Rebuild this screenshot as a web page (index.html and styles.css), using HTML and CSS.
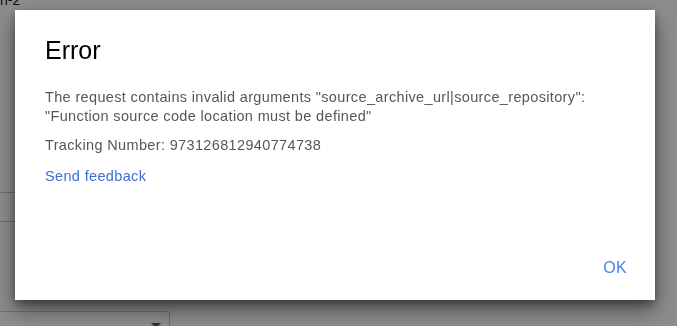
FILE: index.html
```html
<!DOCTYPE html>
<html>
<head>
<meta charset="utf-8">
<link rel="stylesheet" href="styles.css">
</head>
<body>
<div class="page">
  <div class="crumb">n-2</div>
  <div class="rows">
    <div class="row"></div>
    <div class="row"></div>
  </div>
  <div class="select"><span class="arrow"></span></div>
</div>
<div class="scrim"></div>
<div class="dialog">
  <div class="content">
    <h1 class="title">Error</h1>
    <p class="msg">The request contains invalid arguments "source_archive_url|source_repository":<br>"Function source code location must be defined"</p>
    <p class="msg">Tracking Number: 973126812940774738</p>
    <a class="link" href="#">Send feedback</a>
  </div>
  <div class="actions">
    <button class="btn">OK</button>
  </div>
</div>
</body>
</html>
```
FILE: styles.css
```css
html, body {
  margin: 0;
  padding: 0;
  width: 677px;
  height: 326px;
  overflow: hidden;
  background: #ffffff;
  font-family: "Liberation Sans", Arial, sans-serif;
}
.page {
  display: flex;
  flex-direction: column;
}
.crumb {
  font-size: 14px;
  line-height: 16px;
  margin-top: -8px;
  color: #202020;
}
.rows {
  margin-top: 184px;
  width: 320px;
}
.row {
  height: 28px;
  border-top: 1px solid #c4c4c4;
}
.select {
  margin-top: 61px;
  width: 169px;
  height: 15px;
  border-top: 1px solid #c8c8c8;
  border-right: 1px solid #c8c8c8;
  border-radius: 0 3px 0 0;
  position: relative;
}
.arrow {
  position: absolute;
  left: 151px;
  top: 11px;
  width: 0;
  height: 0;
  border-left: 5px solid transparent;
  border-right: 5px solid transparent;
  border-top: 5px solid #555;
}
.scrim {
  position: fixed;
  inset: 0;
  background: rgba(0, 0, 0, 0.45);
}
.dialog {
  position: fixed;
  left: 15px;
  top: 10px;
  width: 640px;
  height: 290px;
  background: #ffffff;
  box-shadow: 0 10px 20px rgba(0, 0, 0, 0.45), 0 4px 8px rgba(0, 0, 0, 0.3);
  display: flex;
  flex-direction: column;
  box-sizing: border-box;
}
.content {
  padding: 24px 30px 0 30px;
  display: flex;
  flex-direction: column;
  align-items: flex-start;
}
.title {
  margin: 0 0 22px 0;
  font-size: 25px;
  line-height: 32px;
  font-weight: normal;
  color: #000000;
}
.msg {
  margin: 0 0 10px 0;
  font-size: 14.5px;
  letter-spacing: 0.35px;
  line-height: 19px;
  color: #575757;
}
.link {
  margin-top: 2px;
  font-size: 14.5px;
  letter-spacing: 0.35px;
  line-height: 19px;
  color: #3b6ed8;
  text-decoration: none;
}
.actions {
  margin-top: auto;
  display: flex;
  justify-content: flex-end;
  padding: 0 28px 22px 0;
}
.btn {
  border: none;
  background: none;
  padding: 0;
  font-family: "Liberation Sans", Arial, sans-serif;
  font-size: 16px;
  letter-spacing: 0.3px;
  line-height: 20px;
  color: #4285f4;
}
```
